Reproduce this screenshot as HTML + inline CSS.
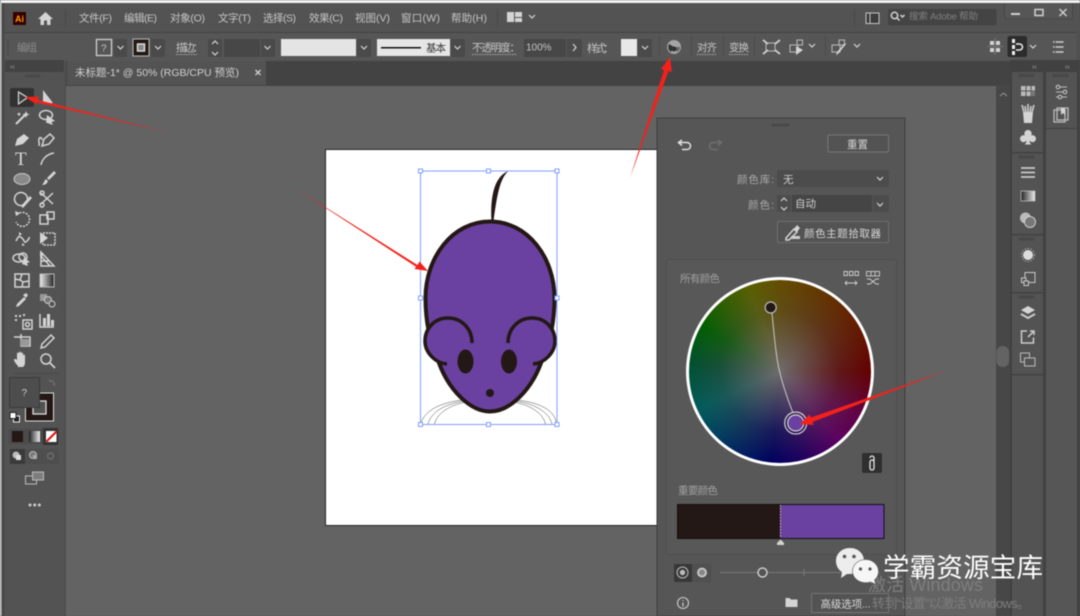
<!DOCTYPE html>
<html><head><meta charset="utf-8"><style>
html,body{margin:0;padding:0;width:1080px;height:616px;overflow:hidden;background:#535353}
svg{display:block;filter:blur(.5px)}
text{font-family:"Liberation Sans","Noto Sans CJK SC",sans-serif;fill:#c6c6c6;font-size:10.5px}
.ic{fill:none;stroke:#d4d4d4;stroke-width:1.5}
.f{fill:#d4d4d4}
.dd{fill:none;stroke:#d5d5d5;stroke-width:1.2}
.u{stroke:#aaa;stroke-width:1;stroke-dasharray:1.5 1}
</style></head><body>
<svg width="1080" height="616" viewBox="0 0 1080 616" xmlns="http://www.w3.org/2000/svg">
<defs><linearGradient id="g" x1="0" x2="1" y1="0" y2="0"><stop offset="0" stop-color="#222"/><stop offset="1" stop-color="#eee"/></linearGradient>
<linearGradient id="h" x1="0" x2="1"><stop offset="0" stop-color="#eee"/><stop offset="1" stop-color="#222"/></linearGradient></defs>
<rect width="1080" height="616" fill="#505050"/>
<rect width="1080" height="3" fill="#f2f2f2"/>
<rect x="0" y="0" width="1.5" height="616" fill="#d8d8d8"/>
<rect x="1.5" y="3" width="1078" height="29" fill="#535353"/>
<!-- title bar -->
<rect x="13" y="12" width="13" height="13" rx="1" fill="#330000"/>
<text x="15" y="22" style="font-size:9px;font-weight:bold;fill:#ff9a00">Ai</text>
<path class="f" d="M38 19 L45.500 12 L53 19 L50.500 19 L50.500 25 L47 25 L47 20.500 L44 20.500 L44 25 L40.500 25 L40.500 19Z"/>
<rect x="65" y="9" width="1" height="18" fill="#484848"/>
<text x="79" y="21.500" textLength="33">文件(F)</text><text x="124" y="21.500" textLength="33">编辑(E)</text><text x="170" y="21.500" textLength="35">对象(O)</text><text x="218" y="21.500" textLength="33">文字(T)</text><text x="263" y="21.500" textLength="33">选择(S)</text><text x="309" y="21.500" textLength="34">效果(C)</text><text x="355" y="21.500" textLength="35">视图(V)</text><text x="401" y="21.500" textLength="39">窗口(W)</text><text x="451" y="21.500" textLength="36">帮助(H)</text>
<rect x="497" y="9" width="1" height="18" fill="#484848"/>
<path class="f" d="M507 12h7v10h-7zM515 12h7v5h-7zM515 18h7v4h-7z"/>
<path class="dd" d="M529 15l3 3 3-3"/>
<rect x="854" y="9" width="1" height="18" fill="#484848"/>
<rect x="866" y="13" width="13" height="10.500" fill="#3d3d3d" stroke="#c5c5c5"/><path d="M870 13v10.500" stroke="#c5c5c5"/>
<rect x="888" y="9" width="108.500" height="16.500" rx="2" fill="#444"/>
<circle cx="894.500" cy="15.500" r="3.200" class="ic"/><path class="ic" d="M897 18l2.500 2.500M900.500 15l2 2 2-2"/>
<text x="909" y="19.500" style="font-size:9.500px;fill:#7f7f7f" textLength="69">搜索 Adobe 帮助</text>
<path d="M1004.500 3v13a3 3 0 0 0 3 3h65V3" fill="#565656" stroke="#474747"/>
<rect x="1011" y="13" width="9" height="2" fill="#cfcfcf"/><rect x="1035" y="9.500" width="8" height="6" fill="none" stroke="#cfcfcf" stroke-width="1.500"/><path d="M1059.500 9l7 7m0-7l-7 7" stroke="#cfcfcf" stroke-width="1.400"/>
<!-- control bar -->
<rect x="3" y="32" width="1074" height="1" fill="#444"/>
<rect x="4" y="33" width="1073" height="28" fill="#565656"/>
<rect x="7.500" y="40" width="1" height="15" fill="#444"/>
<text x="17" y="51" style="fill:#8b8b8b" textLength="20">编组</text>
<rect x="96.500" y="39.500" width="15" height="16" fill="#555" stroke="#cfcfcf" stroke-width="1.300"/><text x="101" y="51.500" style="font-size:10px">?</text>
<rect x="114" y="39" width="13" height="18" rx="1" fill="#4a4a4a"/><path class="dd" d="M117.500 46l3 3 3-3"/>
<rect x="133" y="39" width="16" height="17" fill="#231815" stroke="#bbb"/><rect x="137.500" y="44" width="7" height="7" fill="#888" stroke="#ddd" stroke-width="1.500"/>
<rect x="151" y="39" width="14" height="18" rx="1" fill="#4a4a4a"/><path class="dd" d="M155 46l3 3 3-3"/>
<text x="176" y="51" textLength="27">描边：</text><path class="u" d="M176 54.500h21"/>
<rect x="208" y="39" width="14" height="18" rx="1" fill="#4a4a4a"/><path class="dd" d="M212 44l3-3 3 3M212 52l3 3 3-3"/>
<rect x="224" y="39" width="36" height="18" fill="#474747"/>
<rect x="261" y="39" width="14" height="18" rx="1" fill="#4a4a4a"/><path class="dd" d="M264.500 46l3 3 3-3"/>
<rect x="281" y="39" width="75" height="17" fill="#e4e4e4"/>
<rect x="357" y="39" width="14" height="18" rx="1" fill="#4a4a4a"/><path class="dd" d="M361 46l3 3 3-3"/>
<rect x="377" y="39" width="73" height="17" fill="#e6e6e6"/><rect x="381" y="47" width="40" height="1.500" fill="#111"/><text x="426" y="51.500" style="fill:#333" textLength="20">基本</text>
<rect x="451" y="39" width="14" height="18" rx="1" fill="#4a4a4a"/><path class="dd" d="M454.500 46l3 3 3-3"/>
<text x="472" y="51" textLength="48">不透明度：</text><path class="u" d="M472 54.500h44"/>
<rect x="524" y="39" width="42" height="18" fill="#474747"/><text x="526" y="50.500" style="font-size:10px" >100%</text>
<rect x="567" y="39" width="15" height="18" rx="1" fill="#4a4a4a"/><path class="dd" d="M573 44l3 3.500-3 3.500" stroke-width="1.500"/>
<text x="587" y="52" textLength="27" style="font-size:11px">样式：</text>
<rect x="621" y="39" width="16" height="17" fill="#e8e8e8"/>
<rect x="638" y="39" width="14" height="18" rx="1" fill="#4a4a4a"/><path class="dd" d="M642 46l3 3 3-3"/>
<rect x="659" y="36" width="1" height="20" fill="#4a4a4a"/>
<circle cx="674" cy="47" r="7" fill="#a5a5a5"/><path d="M674 47L669 44A6 6 0 0 0 671 52Z" fill="#333"/><path d="M674 47L677 52A6 6 0 0 0 680 47Z" fill="#666"/><circle cx="674" cy="49" r="2.500" fill="#333"/>
<rect x="691" y="36" width="1" height="20" fill="#4a4a4a"/>
<text x="697" y="51" textLength="20">对齐</text><path class="u" d="M697 54.500h20"/>
<text x="729" y="51" textLength="20">变换</text><path class="u" d="M729 54.500h20"/>
<rect x="723" y="36" width="1" height="20" fill="#4a4a4a"/><rect x="754" y="36" width="1" height="20" fill="#4a4a4a"/>
<rect x="766" y="43" width="9" height="8" fill="none" stroke="#bbb"/><path d="M763 40l5 4m12-4l-5 4m-12 10l5-4m12 4l-5-4" stroke="#ccc" stroke-width="1.800"/>
<rect x="790" y="45" width="8" height="7" fill="none" stroke="#bbb"/><rect x="797" y="40" width="5.500" height="5" fill="none" stroke="#bbb"/><path class="f" d="M796 46l7 4-7 5z"/>
<path class="dd" d="M809 44l3 3 3-3"/>
<rect x="825" y="36" width="1" height="20" fill="#4a4a4a"/>
<rect x="832" y="45" width="8" height="7" fill="none" stroke="#bbb"/><rect x="839" y="40" width="5.500" height="5" fill="none" stroke="#bbb"/><path d="M846 44l-8 10-2 1 1-3 8-9z" class="f"/>
<path class="dd" d="M854 44l3 3 3-3"/>
<path class="f" d="M990 41h4v4h-4zM996 41h4v4h-4zM990 48h4v4h-4zM996 48h4v4h-4z"/><path d="M995 38v17M987 46.500h16" stroke="#777"/>
<rect x="1007.500" y="36" width="19.500" height="21" rx="2" fill="#2c2c2c"/>
<rect x="1012" y="39" width="3" height="4" fill="#eee"/><rect x="1012" y="45" width="3" height="4" fill="#eee"/><rect x="1012" y="51" width="3" height="4" fill="#eee"/><path d="M1016 44h3.500a3 3 0 0 1 0 6H1016" fill="none" stroke="#eee" stroke-width="1.500"/>
<path class="dd" d="M1030 45l3 3 3-3"/>
<path d="M1053 42h1.500m1 0h8M1053 47h1.500m1 0h8M1053 52h1.500m1 0h8" stroke="#ccc" stroke-width="1.500"/>
<!-- tab bar & canvas -->
<rect x="66" y="61" width="945" height="25" fill="#434343"/>
<rect x="67" y="61" width="199" height="24" fill="#535353"/>
<text x="75" y="76" textLength="164" style="font-size:10.500px;fill:#d0d0d0">未标题-1* @ 50% (RGB/CPU 预览)</text>
<path d="M255.500 70l5 5m0-5l-5 5" stroke="#d0d0d0" stroke-width="1.300"/>
<rect x="66" y="86" width="930" height="530" fill="#636363"/>
<rect x="996" y="85" width="14" height="531" fill="#474747"/>
<path d="M1000 96l3.500-3 3.500 3" fill="none" stroke="#888" stroke-width="1.200"/>
<rect x="996.500" y="346" width="12.500" height="21" rx="6" fill="#636363"/>
<!-- left toolbar -->
<rect x="1.500" y="3" width="3" height="613" fill="#494949"/>
<rect x="5" y="60" width="59" height="12" fill="#434343"/>
<text x="10" y="69" style="font-size:7px;fill:#aaa">‹‹</text>
<rect x="5" y="72" width="59" height="544" fill="#535353"/>
<path d="M25 76h16" stroke="#3f3f3f" stroke-width="3" stroke-dasharray="1 1"/>
<rect x="10" y="88" width="24" height="19" rx="2" fill="#323232"/>
<path d="M18.500 92v12l9-6.500z" fill="#3a3a3a" stroke="#d8d8d8" stroke-width="1.200"/>
<path class="f" d="M43 90v14l10-1z"/>
<path d="M16 124l9-9" stroke="#d4d4d4" stroke-width="2"/><path class="f" d="M26 111l1 2.500 2.500 1-2.500 1-1 2.500-1-2.500-2.500-1 2.500-1zM19 112l.7 1.500 1.500.7-1.500.7-.7 1.500-.7-1.500-1.500-.7 1.500-.7z"/>
<ellipse cx="46" cy="115" rx="6.500" ry="4.500" class="ic"/><path class="f" d="M47 115l8 6-3.500 1 1.500 3-7-2.500z"/>
<path class="f" d="M15 146l2-7 7-5 5 4-6 6z"/>
<path class="ic" d="M39 146c1-4-1-4 0-7s3-1 3 1M42 146l2-7 6-5 4 4-5 6z"/>
<text x="15" y="165" style="font-size:19px;font-family:'Liberation Serif',serif;fill:#d8d8d8">T</text>
<path class="ic" d="M41 165c1-6 6-11 13-12"/>
<ellipse cx="22" cy="179" rx="8" ry="5.500" fill="#8a8a8a" stroke="#c8c8c8"/>
<path class="f" d="M54 171l2 2-7 7-2-2zM46 179l2 2c-1 3-3 4-6 4 2-2 2-4 4-6z"/>
<circle cx="21" cy="199" r="6.500" class="ic" stroke-width="1.700"/><path d="M21 206l9-10 2 2-9 10z" class="f"/>
<path class="ic" d="M41 193l12 11M41 204l12-11"/><circle cx="42" cy="193" r="2" class="ic"/><circle cx="42" cy="205" r="2" class="ic"/>
<path class="ic" stroke-dasharray="2 1.200" d="M17 215a7 7 0 1 1-1 7"/><path class="f" d="M15 211l5 2-4 3z"/>
<rect x="40" y="215" width="8" height="9" class="ic"/><rect x="47" y="212" width="7" height="7" class="ic"/>
<path class="ic" d="M16 241c2-4 3-6 6-3s2 6 5 3 2-4 2-4"/><path class="f" d="M19 232l3 2-3 2zM22 243l3 2-3 1z"/>
<rect x="43" y="233" width="12" height="12" class="ic" stroke-dasharray="2 1"/><path class="f" d="M40 232l8 6-8 6z"/>
<ellipse cx="19" cy="258" rx="6" ry="4" class="ic"/><ellipse cx="23" cy="257" rx="4" ry="4" class="ic"/><path class="f" d="M24 258l6 4-3 1 1 3-6-2z"/>
<path class="ic" d="M41 252v14h13zM41 256l9 10M41 261h8"/><path class="f" d="M40 252l4 3-4 2z"/>
<rect x="15" y="274" width="14" height="13" class="ic"/><path class="ic" d="M15 279l5 1 2-6M22 287l1-5 6-1M20 280l3 2"/>
<rect x="40" y="274" width="14" height="13" fill="url(#h)" stroke="#bbb"/>
<path class="f" d="M16 307l1-3 7-7 2 2-7 7z"/><path class="f" d="M23 295l3-2 2 2-2 3z"/>
<rect x="40" y="294" width="7" height="7" fill="#999"/><circle cx="48" cy="300" r="3.500" fill="#777" stroke="#ccc"/><circle cx="52" cy="304" r="3" fill="#555" stroke="#ccc"/>
<path class="f" d="M15 315h2v2h-2zM19 315h2v2h-2zM15 319h2v2h-2zM23 314h2v2h-2z"/><rect x="23" y="320" width="9" height="9" class="ic"/><circle cx="27.500" cy="324.500" r="2" class="ic"/>
<path class="ic" d="M40 314v13h14"/><path class="f" d="M43 318h3v8h-3zM47 314h3v12h-3zM51 320h3v6h-3z"/>
<path class="ic" d="M17 337h4v-3M21 337h9v9h-9z"/><path class="ic" d="M14 337h3"/><rect x="20" y="339" width="9" height="7" fill="#999"/>
<path class="ic" d="M41 348l1-4 9-9 3 3-9 9z"/>
<path class="f" d="M18 366c-2-2-4-5-4-6 0-2 2-1 3 0v-6c0-2 2-2 2 0v-1c0-2 2-2 2 0v1c0-2 2-2 2 0v2c0-2 2-2 2 0v6c0 3-1 5-3 5h-4z"/>
<circle cx="46" cy="359" r="5" class="ic" stroke-width="1.500"/><path d="M50 363l5 5" stroke="#d0d0d0" stroke-width="1.800"/>
<rect x="14" y="373" width="46" height="1" fill="#4a4a4a"/>
<path d="M49 381a4 4 0 0 1 5 5" fill="none" stroke="#6f6f6f" stroke-width="1.500"/>
<rect x="25.500" y="393" width="28" height="28" fill="#231815" stroke="#ddd"/>
<rect x="33" y="401" width="13" height="13" fill="#535353" stroke="#ddd" stroke-width="1.300"/>
<rect x="9.500" y="377.500" width="30" height="30" fill="#4d4d4d" stroke="#3a3a3a"/><text x="21.500" y="396" style="font-size:10px;fill:#cfcfcf">?</text>
<rect x="13.500" y="416" width="6" height="6" fill="#222" stroke="#eee"/><rect x="10" y="412.500" width="6" height="6" fill="#fff" stroke="#222"/>
<rect x="9" y="429" width="50" height="15" rx="1" fill="#4b4b4b"/>
<rect x="12" y="431" width="11" height="11" fill="#231815"/>
<rect x="29" y="431" width="11" height="11" fill="url(#g)"/>
<rect x="43" y="428" width="15" height="17" fill="#333"/><rect x="46" y="431" width="10.500" height="11" fill="#fff"/><path d="M46.500 441.500l10-10" stroke="#e01010" stroke-width="2"/>
<rect x="9" y="449" width="50" height="15" rx="1" fill="#4e4e4e"/><rect x="10" y="449" width="15" height="15" rx="1" fill="#3a3a3a"/>
<circle cx="16" cy="455" r="3.500" fill="#bbb"/><rect x="16" y="455" width="5" height="5" fill="#ddd"/>
<circle cx="33" cy="455" r="3.500" fill="#777" stroke="#bbb"/><rect x="33" y="455" width="4" height="4" fill="#aaa"/>
<circle cx="50.500" cy="456" r="3" fill="none" stroke="#6c6c6c" stroke-width="1.500"/>
<rect x="25.500" y="476" width="11" height="8" fill="#535353" stroke="#bbb"/><rect x="32.500" y="472" width="11" height="8" fill="#7d7d7d" stroke="#bbb"/>
<circle cx="30" cy="505" r="1.500" fill="#ccc"/><circle cx="34.700" cy="505" r="1.500" fill="#ccc"/><circle cx="39.300" cy="505" r="1.500" fill="#ccc"/>
<!-- artboard -->
<rect x="325.500" y="149.500" width="340" height="376" fill="#fff" stroke="#222"/>
<!-- mouse -->
<g fill="none" stroke="#4a4a4a" stroke-width=".5"><path d="M462 400C440 403 425 410 420.500 424M464 401C445 404 431 412 428 424M466 402C450 405 437 413 434.500 424M518 400C540 403 555 410 556.500 424M516 401C535 404 549 412 552 424M514 402C530 405 543 413 545.500 424"/></g>
<path d="M491.500 221C490 195 495 176 508.500 171C500 178 497 195 493.500 221Z" fill="#231815"/>
<path d="M490 221.500C528 221.500 554.500 258 554.500 298C554.500 320 551 340 541 363C531 390 510 411.500 490 411.500C470 411.500 449 390 439 363C429 340 425.500 320 425.500 298C425.500 258 452 221.500 490 221.500Z" fill="#6a41a0" stroke="#231815" stroke-width="4"/>
<path d="M472 343C472 328 461 318 448 318C434 318 425 329 425 341C425 353 436 363.500 447 364" fill="#6a41a0" stroke="#231815" stroke-width="3.500"/>
<path d="M508 343C508 328 519 318 532 318C546 318 555 329 555 341C555 353 544 363.500 533 364" fill="#6a41a0" stroke="#231815" stroke-width="3.500"/>
<ellipse cx="465.500" cy="361.500" rx="8" ry="12" fill="#231815"/><ellipse cx="509" cy="361.500" rx="8" ry="12" fill="#231815"/><circle cx="490" cy="393" r="4" fill="#231815"/>
<!-- selection -->
<rect x="420.500" y="171" width="136.500" height="253.500" fill="none" stroke="#7f9fff"/>
<g fill="#fff" stroke="#7f9fff"><rect x="418.500" y="169" width="4" height="4"/><rect x="486.500" y="169" width="4" height="4"/><rect x="555" y="169" width="4" height="4"/><rect x="418.500" y="296" width="4" height="4"/><rect x="555" y="296" width="4" height="4"/><rect x="418.500" y="422.500" width="4" height="4"/><rect x="486.500" y="422.500" width="4" height="4"/><rect x="555" y="422.500" width="4" height="4"/></g>
<!-- recolor panel -->
<rect x="657" y="118" width="248" height="498" fill="#565656" stroke="#3e3e3e"/>
<path d="M772 125h18" stroke="#3d3d3d" stroke-width="3" stroke-dasharray="1 1"/>
<path d="M682 140l-3.500 2.500 3.500 3M678.500 142.500h8.500a3.500 3.500 0 0 1 0 7h-5" fill="none" stroke="#e0e0e0" stroke-width="1.500"/>
<path d="M718 140l3.500 2.500-3.500 3M721.500 142.500H713a3.500 3.500 0 0 0 0 7h5" fill="none" stroke="#6f6f6f" stroke-width="1.500"/>
<rect x="828" y="135" width="60.500" height="17" rx="1.500" fill="#535353" stroke="#777"/><text x="847" y="148" textLength="21" style="fill:#d5d5d5">重置</text>
<text x="737" y="183" textLength="37" style="fill:#a8a8a8">颜色库:</text>
<rect x="777" y="170" width="112" height="17" rx="1" fill="#4c4c4c"/><text x="783" y="183" style="fill:#d0d0d0">无</text><path class="dd" d="M877 177l3 3 3-3"/>
<text x="748" y="208.500" textLength="26" style="fill:#a8a8a8">颜色:</text>
<rect x="777" y="195" width="14" height="17" rx="1" fill="#4c4c4c"/><path class="dd" d="M781 201l3-3 3 3M781 207l3 3 3-3"/>
<rect x="792" y="195" width="80" height="17" fill="#454545"/><text x="795" y="207" textLength="21" style="fill:#cfcfcf">自动</text>
<rect x="873" y="195" width="16" height="17" rx="1" fill="#4c4c4c"/><path class="dd" d="M877 203l3 3 3-3"/>
<rect x="777.500" y="221.500" width="111" height="21" rx="1.500" fill="#535353" stroke="#6f6f6f"/>
<path class="ic" d="M786 238l8-9 3 3-8 8h-3z"/><path class="f" d="M794 229l3-4 3 3-3 4z"/><rect x="791" y="236" width="9" height="3" fill="#ccc"/>
<text x="804" y="237" textLength="77" style="fill:#d5d5d5">颜色主题拾取器</text>
<rect x="666.500" y="259.500" width="230" height="295" fill="#585858" stroke="#4f4f4f"/>
<text x="680" y="282" textLength="40" style="fill:#a0a0a0">所有颜色</text>
<path d="M844 271.500h3.500v4h-3.500zM849.500 271.500h3.500v4h-3.500zM855 271.500h3.500v4H855z" fill="none" stroke="#ccc" stroke-width=".9"/><path d="M845 283h12m-10-2l-2 2 2 2m8-4l2 2-2 2" fill="none" stroke="#ccc" stroke-width=".9"/>
<rect x="866.500" y="271.500" width="13" height="4.500" fill="none" stroke="#ccc" stroke-width=".9"/><path d="M871 271.500v4.500M875 271.500v4.500M867 279h3l6 5h3M867 284h3l6-5h3" fill="none" stroke="#ccc" stroke-width=".9"/>
<!-- wheel -->
<foreignObject x="686" y="277" width="189" height="190"><div xmlns="http://www.w3.org/1999/xhtml" style="width:182px;height:183px;border:3.500px solid #fff;border-radius:50%;background:radial-gradient(circle closest-side,rgba(112,108,108,.98) 0%,rgba(105,100,100,.7) 28%,rgba(85,80,80,.3) 65%,rgba(60,60,60,0) 100%),conic-gradient(from 0deg,#644c00 0deg,#642c00 40deg,#640000 90deg,#620048 120deg,#5c0060 140deg,#200060 165deg,#000060 185deg,#004060 225deg,#005c5c 245deg,#005030 275deg,#005f00 300deg,#5a6000 340deg,#644c00 360deg)"></div></foreignObject>
<path d="M772 313C775 345 777 362 780 373C784 390 790 405 793 413" fill="none" stroke="#c8c8c8" stroke-width="1"/>
<circle cx="770.700" cy="307.500" r="5.500" fill="#231815" stroke="#bbb" stroke-width="1.200"/>
<circle cx="795.700" cy="423" r="11" fill="none" stroke="#d0d0d0" stroke-width="1.200"/><circle cx="795.700" cy="423" r="8" fill="#6a41a0" stroke="#cfcfcf" stroke-width="1.200"/>
<rect x="862" y="453" width="20" height="20" rx="2" fill="#2f2f2f"/><path d="M870 458a2 2 0 0 1 4 0v3M874 468a2 2 0 0 1-4 0v-6a1.800 1.800 0 0 1 4 0v6" fill="none" stroke="#e8e8e8" stroke-width="1.300"/>
<text x="678" y="494" textLength="40" style="fill:#a0a0a0">重要颜色</text>
<rect x="677.500" y="504.500" width="206.500" height="34" fill="#231815" stroke="#111"/><rect x="780" y="505" width="103.500" height="33" fill="#6a41a0"/>
<path d="M780.500 505v33" stroke="#ccc" stroke-dasharray="1.500 1.500"/>
<path class="f" d="M777 545v-2l3.500-3.500 3.500 3.500v2z"/>
<rect x="674" y="564" width="37.500" height="18" rx="1" fill="#505050"/><rect x="674" y="564" width="18" height="18" rx="1" fill="#383838"/>
<circle cx="682.500" cy="572.500" r="5.500" fill="none" stroke="#bbb"/><circle cx="682.500" cy="572.500" r="2.700" fill="#bbb"/>
<circle cx="702" cy="572.500" r="4" fill="#888" stroke="#ccc" stroke-width="1.800"/>
<path d="M720 572.500H880M804 569v7" stroke="#787878"/>
<circle cx="762.500" cy="572.500" r="4.500" fill="#555" stroke="#ddd" stroke-width="1.300"/>
<circle cx="683" cy="603" r="5.500" fill="none" stroke="#ccc" stroke-width="1.100"/><path d="M683 601v-1M683 602.500v4" stroke="#ccc" stroke-width="1.200"/>
<path class="f" d="M785.500 598h4l1.500 1.500h6.500v7.500h-12z"/>
<rect x="811.500" y="593.500" width="77" height="19" rx="1" fill="#535353" stroke="#757575"/>
<text x="820.500" y="607.500" textLength="50" style="fill:#d8d8d8">高级选项...</text>
<!-- right dock -->
<rect x="1010" y="60" width="70" height="556" fill="#414141"/>
<text x="1032" y="69" style="font-size:7px;fill:#aaa">‹‹</text><text x="1065" y="69" style="font-size:7px;fill:#aaa">‹‹</text>
<g fill="#535353"><rect x="1012" y="72" width="31" height="80"/><rect x="1012" y="153.500" width="31" height="80.500"/><rect x="1012" y="235.500" width="31" height="56.500"/><rect x="1012" y="293.500" width="31" height="80.500"/><rect x="1012" y="375.500" width="31" height="241"/><rect x="1046" y="72" width="31" height="56"/><rect x="1046" y="129" width="31" height="487" fill="#565656"/></g>
<g stroke="#3d3d3d" stroke-width="3" stroke-dasharray="1 1"><path d="M1019 75.500h16M1019 157h16M1019 239h16M1019 297h16M1053 75.500h16"/></g>
<rect x="1021" y="86" width="14" height="10" fill="#bbb"/><path d="M1026 86v10M1031 86v10M1021 91h14" stroke="#555"/><rect x="1031" y="91" width="4" height="5" fill="#777"/>
<path class="f" d="M1023 112h10l-1 11h-8z"/><path d="M1024 112l-2-7M1028 112v-8M1032 112l2-7M1026 112l-1-6M1030 112l1-6" stroke="#ccc" stroke-width="1.600"/>
<path class="f" d="M1028 130a3.500 3.500 0 0 1 3 5.500 3.500 3.500 0 1 1-1.500 5c0 2 .5 3 2 4h-7c1.500-1 2-2 2-4a3.500 3.500 0 1 1-1.500-5 3.500 3.500 0 0 1 3-5.500z"/>
<path d="M1021 168h14M1021 172.500h14M1021 177h14" stroke="#c8c8c8" stroke-width="1.800"/>
<rect x="1021" y="191" width="14" height="10" fill="url(#g)" stroke="#bbb" stroke-width=".8"/>
<circle cx="1025.500" cy="218" r="5.500" fill="#bbb"/><circle cx="1030" cy="222" r="5.500" fill="#777" stroke="#ccc"/>
<circle cx="1028" cy="255" r="5" fill="#ddd"/><circle cx="1028" cy="255" r="6.500" fill="none" stroke="#aaa" stroke-dasharray="1.500 1.500"/>
<rect x="1025" y="272.500" width="10" height="10" fill="none" stroke="#c8c8c8"/><rect x="1021.500" y="278" width="4.500" height="4.500" fill="#535353" stroke="#c8c8c8"/><rect x="1024" y="281" width="4.500" height="4.500" fill="#535353" stroke="#c8c8c8"/>
<path class="f" d="M1028 306l7 4-7 4-7-4z"/><path d="M1021 314l7 4 7-4" fill="none" stroke="#ccc" stroke-width="2"/>
<path d="M1027 331h-5.500v12h12v-5.500M1028 337l6-6m-4 0h4v4" fill="none" stroke="#ccc" stroke-width="1.500"/>
<rect x="1020.500" y="353" width="9" height="9" fill="none" stroke="#bbb"/><rect x="1024.500" y="358" width="10.500" height="8" fill="#535353" stroke="#bbb"/>
<path d="M1056 87h11M1056 92h11M1056 97h11" stroke="#bbb"/><circle cx="1058" cy="87" r="1.800" fill="#535353" stroke="#ccc"/><circle cx="1065" cy="92" r="1.800" fill="#535353" stroke="#ccc"/><circle cx="1060" cy="97" r="1.800" fill="#535353" stroke="#ccc"/>
<rect x="1057" y="108" width="11" height="12" fill="#535353" stroke="#bbb" stroke-width="1.300"/><rect x="1054" y="110" width="11" height="12" fill="none" stroke="#bbb" stroke-width="1.300"/><path class="f" d="M1061 108h4v7l-2-2-2 2z"/>
<!-- watermark -->
<text x="868" y="591" textLength="115" style="font-size:18px;fill:#7e7e7e">激活 Windows</text>
<text x="872" y="608" textLength="158" style="font-size:13px;fill:#7e7e7e">转到“设置”以激活 Windows。</text>
<path d="M850 548c8 0 14 5.500 14 13s-6 13-14 13c-1 0-2 0-3 0l-6 4 1-6c-4-2.500-6-6.500-6-11 0-7.500 6-13 14-13z" fill="#ededed"/>
<circle cx="844.500" cy="556.500" r="1.800" fill="#555"/><circle cx="854" cy="556.500" r="1.800" fill="#555"/>
<path d="M865.500 559.500c7 0 13 5 13 12 0 3.500-1.500 6.500-4 8.500l1.500 4.500-5.500-2.500c-1.500.5-3.500.7-5 .7-7 0-13-5-13-11.500 0-6.500 6-11.700 13-11.700z" fill="#f6f6f6" stroke="#565656" stroke-width=".6"/>
<circle cx="860.500" cy="569" r="1.600" fill="#555"/><circle cx="870" cy="569" r="1.600" fill="#555"/>
<text x="883" y="577" textLength="160" style="font-size:26.500px;fill:#fff">学霸资源宝库</text>
<!-- red arrows -->
<g fill="#f4211b">
<polygon points="167,132 38,100 38.500,96.500 25,97 36,104 37,102.500"/>
<polygon points="630,178 664,70 661,69 670,57 672,72 668.500,71"/>
<polygon points="295,188 417.500,265 419.500,261.500 428,271 414.500,269 416,266.800"/>
<polygon points="948,370 811,417.500 809.500,414.500 800,424 813.500,425 812.500,422"/>
</g>
</svg>
</body></html>
